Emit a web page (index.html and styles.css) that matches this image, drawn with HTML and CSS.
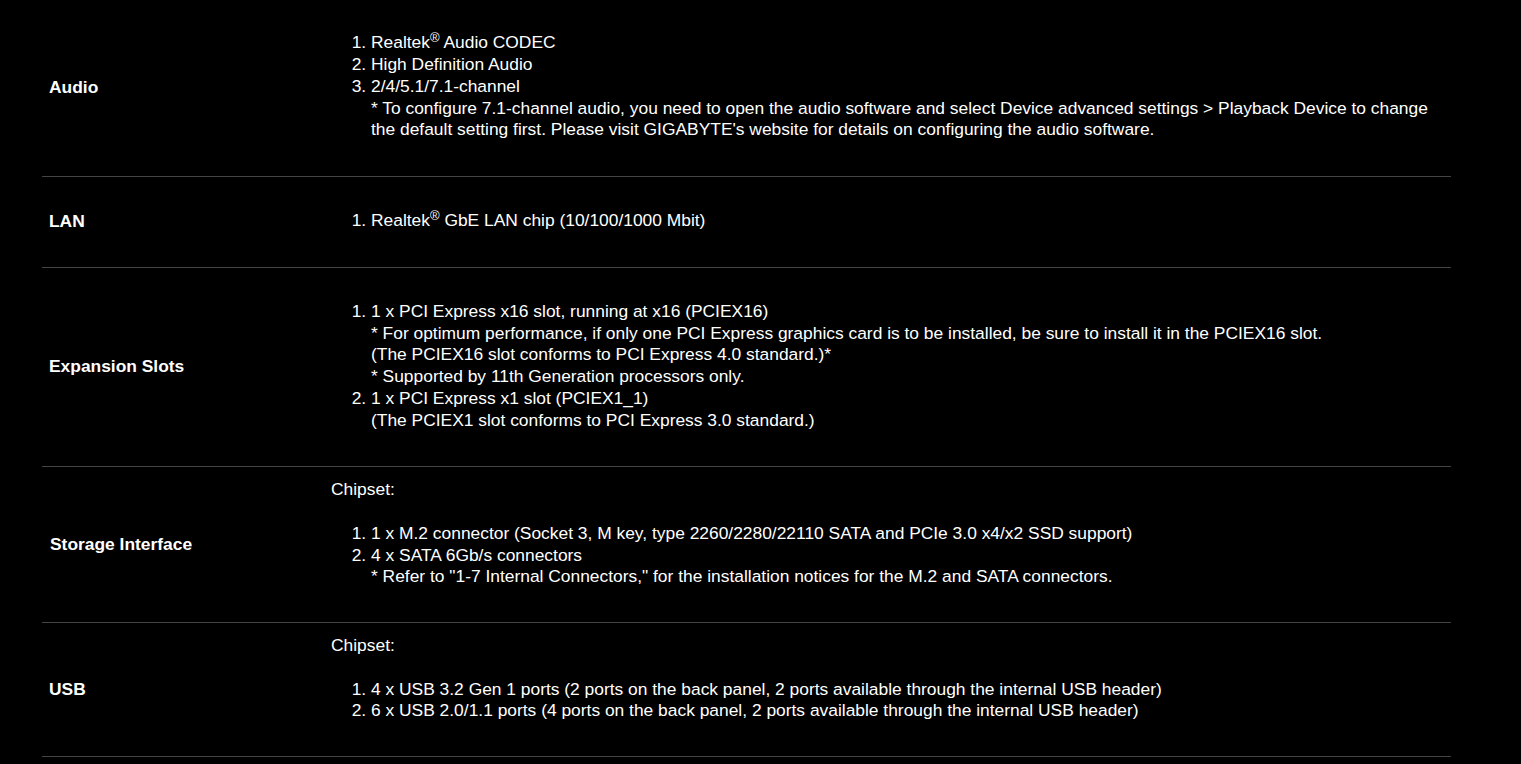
FILE: index.html
```html
<!DOCTYPE html>
<html>
<head>
<meta charset="utf-8">
<link rel="stylesheet" href="styles.css">
</head>
<body>
<div class="specs">
  <div class="row first">
    <div class="label">Audio</div>
    <div class="value">
      <ol>
        <li>Realtek<sup>®</sup> Audio CODEC</li>
        <li>High Definition Audio</li>
        <li>2/4/5.1/7.1-channel<br>* To configure 7.1-channel audio, you need to open the audio software and select Device advanced settings &gt; Playback Device to change<br>the default setting first. Please visit GIGABYTE's website for details on configuring the audio software.</li>
      </ol>
    </div>
  </div>
  <div class="row">
    <div class="label">LAN</div>
    <div class="value">
      <ol>
        <li>Realtek<sup>®</sup> GbE LAN chip (10/100/1000 Mbit)</li>
      </ol>
    </div>
  </div>
  <div class="row">
    <div class="label">Expansion Slots</div>
    <div class="value">
      <ol>
        <li>1 x PCI Express x16 slot, running at x16 (PCIEX16)<br>* For optimum performance, if only one PCI Express graphics card is to be installed, be sure to install it in the PCIEX16 slot.<br>(The PCIEX16 slot conforms to PCI Express 4.0 standard.)*<br>* Supported by 11th Generation processors only.</li>
        <li>1 x PCI Express x1 slot (PCIEX1_1)<br>(The PCIEX1 slot conforms to PCI Express 3.0 standard.)</li>
      </ol>
    </div>
  </div>
  <div class="row chip">
    <div class="label label-storage">Storage Interface</div>
    <div class="value">
      <p class="chipset">Chipset:</p>
      <ol>
        <li>1 x M.2 connector (Socket 3, M key, type 2260/2280/22110 SATA and PCIe 3.0 x4/x2 SSD support)</li>
        <li>4 x SATA 6Gb/s connectors<br>* Refer to "1-7 Internal Connectors," for the installation notices for the M.2 and SATA connectors.</li>
      </ol>
    </div>
  </div>
  <div class="row chip">
    <div class="label">USB</div>
    <div class="value">
      <p class="chipset">Chipset:</p>
      <ol>
        <li>4 x USB 3.2 Gen 1 ports (2 ports on the back panel, 2 ports available through the internal USB header)</li>
        <li>6 x USB 2.0/1.1 ports (4 ports on the back panel, 2 ports available through the internal USB header)</li>
      </ol>
    </div>
  </div>
</div>
</body>
</html>
```

FILE: styles.css
```css
html, body {
  margin: 0;
  padding: 0;
  background: #000;
}
body {
  font-family: "Liberation Sans", Arial, sans-serif;
  font-size: 17.4px;
  line-height: 21.75px;
  color: #fff;
  overflow: hidden;
}
.specs {
  margin-left: 42px;
  width: 1409px;
}
.row {
  display: grid;
  grid-template-columns: 289px 1fr;
  border-bottom: 1px solid #444;
}
.row.first {
  margin-top: -0.75px;
}
.label {
  align-self: center;
  padding-left: 7px;
  font-weight: bold;
}
.label-storage {
  padding-left: 8px;
}
.value {
  padding: 33px 0 35px 0;
  white-space: nowrap;
}
.row.chip .value {
  padding-top: 12px;
  padding-bottom: 34px;
}
.chipset {
  margin: 0 0 21.75px 0;
}
ol {
  margin: 0;
  padding-left: 40px;
}
sup {
  font-size: 0.75em;
  line-height: 0;
  vertical-align: 0.45em;
}
```
